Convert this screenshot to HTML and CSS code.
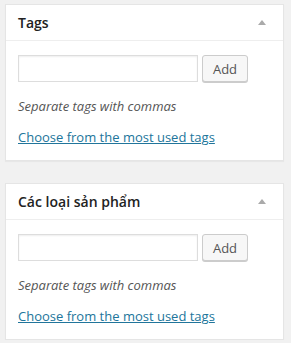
FILE: index.html
```html
<!DOCTYPE html>
<html>
<head>
<meta charset="UTF-8">
<title>Tags</title>
<link rel="stylesheet" href="styles.css">
</head>
<body>
<div class="khung">
    <div class="postbox">
        <div class="tieude">
            <h3>Tags</h3>
            <span class="muiten"></span>
        </div>
        <div class="noidung">
            <div class="hang">
                <input type="text" class="onhap">
                <button class="nut">Add</button>
            </div>
            <p class="goiy">Separate tags with commas</p>
            <a href="#" class="lienket">Choose from the most used tags</a>
        </div>
    </div>
    <div class="postbox">
        <div class="tieude">
            <h3>Các loại sản phẩm</h3>
            <span class="muiten"></span>
        </div>
        <div class="noidung">
            <div class="hang">
                <input type="text" class="onhap">
                <button class="nut">Add</button>
            </div>
            <p class="goiy">Separate tags with commas</p>
            <a href="#" class="lienket">Choose from the most used tags</a>
        </div>
    </div>
</div>
</body>
</html>
```

FILE: styles.css
```css
*{margin:0;padding:0;box-sizing:border-box;}
body
{
    background: #f1f1f1;
    font-family: "Open Sans", "Noto Sans", sans-serif;
    font-size: 13px;
    color: #444;
}
.khung
{
    display: flex;
    flex-direction: column;
    gap: 22px;
    padding: 4px 7px 0 5px;
}
.postbox
{
    background: #fff;
    border: 1px solid #e5e5e5;
    box-shadow: 0 1px 1px rgba(0,0,0,0.04);
}
.tieude
{
    display: flex;
    align-items: center;
    justify-content: space-between;
    height: 36px;
    padding: 0 17px 0 12px;
    border-bottom: 1px solid #eee;
}
.tieude h3
{
    font-size: 14px;
    font-weight: 600;
    color: #222;
}
.muiten
{
    width: 0;
    height: 0;
    border-left: 4px solid transparent;
    border-right: 4px solid transparent;
    border-bottom: 5px solid #aaa;
}
.noidung
{
    padding: 14px 12px 0 12px;
    height: 119px;
}
.hang
{
    display: flex;
    gap: 4px;
}
.onhap
{
    width: 180px;
    height: 27px;
    border: 1px solid #ddd;
    box-shadow: inset 0 1px 2px rgba(0,0,0,0.07);
}
.nut
{
    width: 46px;
    height: 27px;
    font-family: inherit;
    font-size: 13px;
    color: #555;
    background: #f7f7f7;
    border: 1px solid #ccc;
    border-radius: 3px;
    box-shadow: 0 1px 0 #ccc;
}
.goiy
{
    font-style: italic;
    color: #555;
    margin-top: 15px;
    line-height: 18px;
}
.lienket
{
    display: block;
    margin-top: 13px;
    color: #21759b;
    line-height: 18px;
}
```
